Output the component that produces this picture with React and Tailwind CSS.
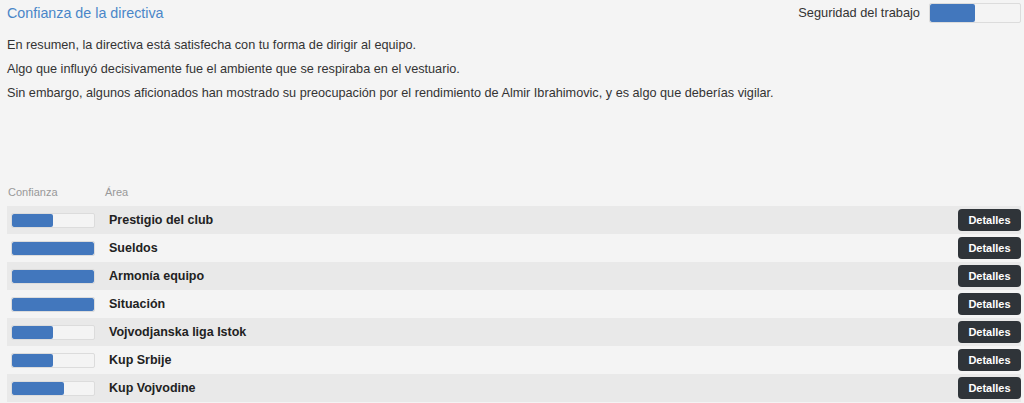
import React from "react";

const areas = [
  { name: "Prestigio del club", value: 50 },
  { name: "Sueldos", value: 100 },
  { name: "Armonía equipo", value: 100 },
  { name: "Situación", value: 100 },
  { name: "Vojvodjanska liga Istok", value: 50 },
  { name: "Kup Srbije", value: 50 },
  { name: "Kup Vojvodine", value: 64 },
];

const Bar = ({ value, className }) => (
  <div className={`relative overflow-hidden rounded-[2px] border border-[#dcdcdc] bg-[#f4f4f4] ${className}`}>
    <div className="h-full rounded-[2px] bg-[#4277bd]" style={{ width: `${value}%` }} />
  </div>
);

const App = () => {
  return (
    <div className="h-[403px] w-[1024px] overflow-hidden bg-[#f4f4f4] font-['Liberation_Sans',Arial,sans-serif] text-[#333]">
      <div className="flex items-start justify-between pl-[7px] pr-[3px] pt-[3px]">
        <h2 className="pt-[1px] text-[14.3px] leading-[18px] text-[#4a86c8]">Confianza de la directiva</h2>
        <div className="flex items-center gap-[9px]">
          <span className="text-[12.8px]">Seguridad del trabajo</span>
          <Bar value={50} className="h-[20px] w-[92px]" />
        </div>
      </div>

      <div className="mt-[14px] flex flex-col gap-[8px] pl-[7px] text-[12.7px] leading-[16px]">
        <p>En resumen, la directiva está satisfecha con tu forma de dirigir al equipo.</p>
        <p>Algo que influyó decisivamente fue el ambiente que se respiraba en el vestuario.</p>
        <p>Sin embargo, algunos aficionados han mostrado su preocupación por el rendimiento de Almir Ibrahimovic, y es algo que deberías vigilar.</p>
      </div>

      <div className="mt-[84px] flex pl-[8px] text-[11px] leading-[14px] text-[#999]">
        <span className="w-[97px]">Confianza</span>
        <span>Área</span>
      </div>

      <div className="ml-[7px] mr-[3px] mt-[7px]">
        {areas.map((a, i) => (
          <div
            key={a.name}
            className={`flex h-[28px] items-center pl-[4px] ${i % 2 === 0 ? "bg-[#e9e9e9]" : "bg-[#f4f4f4]"}`}
          >
            <Bar value={a.value} className="h-[15px] w-[84px]" />
            <span className="ml-[14px] flex-1 text-[12.5px] font-bold text-[#222]">{a.name}</span>
            <button className="h-[22px] w-[63px] rounded-[4px] bg-[#2f3439] text-[11px] font-bold text-white">
              Detalles
            </button>
          </div>
        ))}
      </div>
    </div>
  );
};

export default App;
